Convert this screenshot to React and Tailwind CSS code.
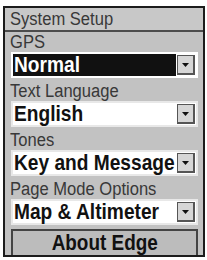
const font = { fontFamily: '"Liberation Sans", Arial, sans-serif' }

function Arrow() {
  return (
    <div className="w-[18px] h-[20px] bg-[#d6d6d6] border border-[#555] border-r-2 border-b-2 flex items-center justify-center">
      <svg width="7" height="4" viewBox="0 0 7 4">
        <path d="M0 0h7L3.5 4z" fill="#111" />
      </svg>
    </div>
  )
}

function Select({ value, selected }) {
  return (
    <div
      className={
        'ml-[6px] mr-[5px] h-[26px] flex items-center border-2 ' +
        (selected ? 'border-white bg-[#111]' : 'border-[#e8e8e8] bg-white')
      }
    >
      <div
        className={
          'flex-1 min-w-0 pl-[1px] text-[22px] font-bold leading-[22px] whitespace-nowrap ' +
          (selected ? 'text-white' : 'text-[#111]')
        }
      >
        <span className="inline-block origin-left scale-x-[0.87]">{value}</span>
      </div>
      <div className={'shrink-0 h-full flex items-center pr-[1px] ' + (selected ? 'bg-white pl-[1px]' : '')}>
        <Arrow />
      </div>
    </div>
  )
}

function Label({ children, h }) {
  return (
    <div className={'px-[5px] text-[18px] text-[#383838] flex items-end ' + h}>
      <span className="inline-block origin-left scale-x-[0.92] leading-[19px]">{children}</span>
    </div>
  )
}

export default function App() {
  return (
    <div className="w-[207px] h-[260px] bg-white pt-[6px] pl-[3px]" style={font}>
      <div className="w-[202px] h-[251px] border-2 border-[#1c1c1c] bg-[#c2c2c2] flex flex-col">
        <div className="h-[24px] bg-[#c8c8c8] border-b-2 border-[#4c4c4c] px-[5px] text-[18px] leading-[22px] text-[#383838]">
          <span className="inline-block origin-left scale-x-[0.92]">System Setup</span>
        </div>
        <Label h="h-[20px]">GPS</Label>
        <Select value="Normal" selected />
        <Label h="h-[23px]">Text Language</Label>
        <Select value="English" />
        <Label h="h-[23px]">Tones</Label>
        <Select value="Key and Message" />
        <Label h="h-[23px]">Page Mode Options</Label>
        <Select value="Map & Altimeter" />
        <div className="mt-auto ml-[6px] mr-[5px] h-[26px] border-2 border-[#444] border-b-0 bg-[#bcbcbc] flex items-center justify-center text-[22px] font-bold text-[#111] leading-[22px]">
          <span className="inline-block scale-x-[0.86]">About Edge</span>
        </div>
      </div>
    </div>
  )
}
